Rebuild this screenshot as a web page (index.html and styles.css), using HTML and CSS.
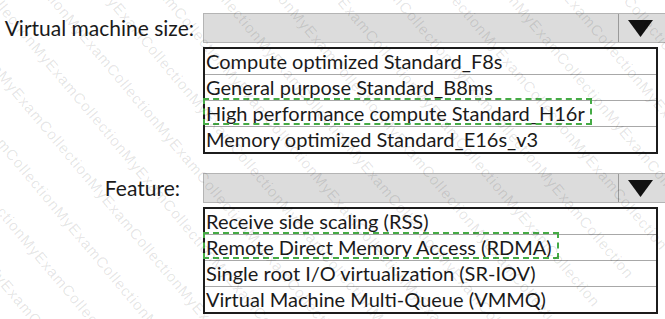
FILE: index.html
```html
<!DOCTYPE html>
<html>
	<head>
		<meta charset="UTF-8">
		<title>Hot Area</title>
		<link rel="stylesheet" href="styles.css">
	</head>
	<body>
		<div id="page">
			<div class="field field-size">
				<div class="label">Virtual machine size:</div>
				<div class="control">
					<div class="select">
						<span class="arrow-btn">
							<svg width="25" height="17" viewBox="0 0 25 17"><polygon points="0,0 25,0 12.5,17" fill="#111"/></svg>
						</span>
					</div>
					<ul class="options">
						<li>Compute optimized Standard_F8s</li>
						<li>General purpose Standard_B8ms</li>
						<li><span class="answer">High performance compute Standard_H16r</span></li>
						<li>Memory optimized Standard_E16s_v3</li>
					</ul>
				</div>
			</div>

			<div class="field field-feature">
				<div class="label">Feature:</div>
				<div class="control">
					<div class="select">
						<span class="arrow-btn">
							<svg width="25" height="17" viewBox="0 0 25 17"><polygon points="0,0 25,0 12.5,17" fill="#111"/></svg>
						</span>
					</div>
					<ul class="options">
						<li>Receive side scaling (RSS)</li>
						<li><span class="answer">Remote Direct Memory Access (RDMA)</span></li>
						<li>Single root I/O virtualization (SR-IOV)</li>
						<li>Virtual Machine Multi-Queue (VMMQ)</li>
					</ul>
				</div>
			</div>

			<!-- watermark -->
			<div class="watermark">
				<div class="wm-lines">
					<p>MyExamCollectionMyExamCollectionMyExamCollectionMyExamCollectionMyExamCollectionMyExamCollectionMyExamCollection</p>
					<p>MyExamCollectionMyExamCollectionMyExamCollectionMyExamCollectionMyExamCollectionMyExamCollectionMyExamCollection</p>
					<p>MyExamCollectionMyExamCollectionMyExamCollectionMyExamCollectionMyExamCollectionMyExamCollectionMyExamCollection</p>
					<p>MyExamCollectionMyExamCollectionMyExamCollectionMyExamCollectionMyExamCollectionMyExamCollectionMyExamCollection</p>
					<p>MyExamCollectionMyExamCollectionMyExamCollectionMyExamCollectionMyExamCollectionMyExamCollectionMyExamCollection</p>
					<p>MyExamCollectionMyExamCollectionMyExamCollectionMyExamCollectionMyExamCollectionMyExamCollectionMyExamCollection</p>
					<p>MyExamCollectionMyExamCollectionMyExamCollectionMyExamCollectionMyExamCollectionMyExamCollectionMyExamCollection</p>
					<p>MyExamCollectionMyExamCollectionMyExamCollectionMyExamCollectionMyExamCollectionMyExamCollectionMyExamCollection</p>
					<p>MyExamCollectionMyExamCollectionMyExamCollectionMyExamCollectionMyExamCollectionMyExamCollectionMyExamCollection</p>
					<p>MyExamCollectionMyExamCollectionMyExamCollectionMyExamCollectionMyExamCollectionMyExamCollectionMyExamCollection</p>
					<p>MyExamCollectionMyExamCollectionMyExamCollectionMyExamCollectionMyExamCollectionMyExamCollectionMyExamCollection</p>
					<p>MyExamCollectionMyExamCollectionMyExamCollectionMyExamCollectionMyExamCollectionMyExamCollectionMyExamCollection</p>
					<p>MyExamCollectionMyExamCollectionMyExamCollectionMyExamCollectionMyExamCollectionMyExamCollectionMyExamCollection</p>
					<p>MyExamCollectionMyExamCollectionMyExamCollectionMyExamCollectionMyExamCollectionMyExamCollectionMyExamCollection</p>
					<p>MyExamCollectionMyExamCollectionMyExamCollectionMyExamCollectionMyExamCollectionMyExamCollectionMyExamCollection</p>
					<p>MyExamCollectionMyExamCollectionMyExamCollectionMyExamCollectionMyExamCollectionMyExamCollectionMyExamCollection</p>
					<p>MyExamCollectionMyExamCollectionMyExamCollectionMyExamCollectionMyExamCollectionMyExamCollectionMyExamCollection</p>
					<p>MyExamCollectionMyExamCollectionMyExamCollectionMyExamCollectionMyExamCollectionMyExamCollectionMyExamCollection</p>
					<p>MyExamCollectionMyExamCollectionMyExamCollectionMyExamCollectionMyExamCollectionMyExamCollectionMyExamCollection</p>
					<p>MyExamCollectionMyExamCollectionMyExamCollectionMyExamCollectionMyExamCollectionMyExamCollectionMyExamCollection</p>
					<p>MyExamCollectionMyExamCollectionMyExamCollectionMyExamCollectionMyExamCollectionMyExamCollectionMyExamCollection</p>
					<p>MyExamCollectionMyExamCollectionMyExamCollectionMyExamCollectionMyExamCollectionMyExamCollectionMyExamCollection</p>
				</div>
			</div>
		</div>
	</body>
</html>
```

FILE: styles.css
```css
* {
	margin: 0;
	padding: 0;
	box-sizing: border-box;
}
ul,li {
	list-style: none;
}
html, body {
	background: #fff;
	overflow: hidden;
}
#page {
	position: relative;
	width: 665px;
	height: 319px;
	padding-top: 13px;
	font-family: "Lato", "Liberation Sans", sans-serif;
	font-size: 20px;
	color: #1a1a1a;
	overflow: hidden;
}

.field {
	display: grid;
	grid-template-columns: 203px 1fr;
}
.field-feature {
	margin-top: 19px;
}
.label {
	height: 30px;
	line-height: 30px;
	font-size: 21px;
	text-align: right;
	white-space: nowrap;
}
.field-size .label {
	padding-right: 9px;
}
.field-feature .label {
	padding-right: 23px;
}

.select {
	display: flex;
	justify-content: flex-end;
	width: 462px;
	height: 30px;
	background: #dcdcdc;
	border: 1px solid #b4b4b4;
	border-right: none;
}
.arrow-btn {
	display: flex;
	align-items: center;
	justify-content: center;
	width: 47px;
	height: 100%;
	border-left: 1px solid #9a9a9a;
	padding-right: 4px;
}

.options {
	margin-top: 4px;
	width: 455px;
	border: 2px solid #1c1c1c;
}
.options li {
	height: 26px;
	line-height: 25px;
	padding-left: 1px;
	border-bottom: 1px solid #a8a8a8;
	white-space: nowrap;
}
.options li:last-child {
	height: 25px;
	border-bottom: none;
}
.answer {
	position: relative;
}
.answer:after {
	content: '';
	position: absolute;
	left: -3px;
	right: -7px;
	top: -3px;
	bottom: 0;
	border: 2px dashed #45ab45;
}

.watermark {
	position: absolute;
	top: 0;
	left: 0;
	right: 0;
	bottom: 0;
	pointer-events: none;
	overflow: hidden;
}
.wm-lines {
	position: absolute;
	left: -368px;
	top: -324px;
	width: 1400px;
	height: 968px;
	overflow: hidden;
	transform: rotate(50deg);
	transform-origin: center;
	font-family: "Liberation Sans", sans-serif;
	font-size: 15px;
	line-height: 44px;
	letter-spacing: 1px;
	color: rgba(0, 0, 0, 0.11);
	white-space: nowrap;
}
```
